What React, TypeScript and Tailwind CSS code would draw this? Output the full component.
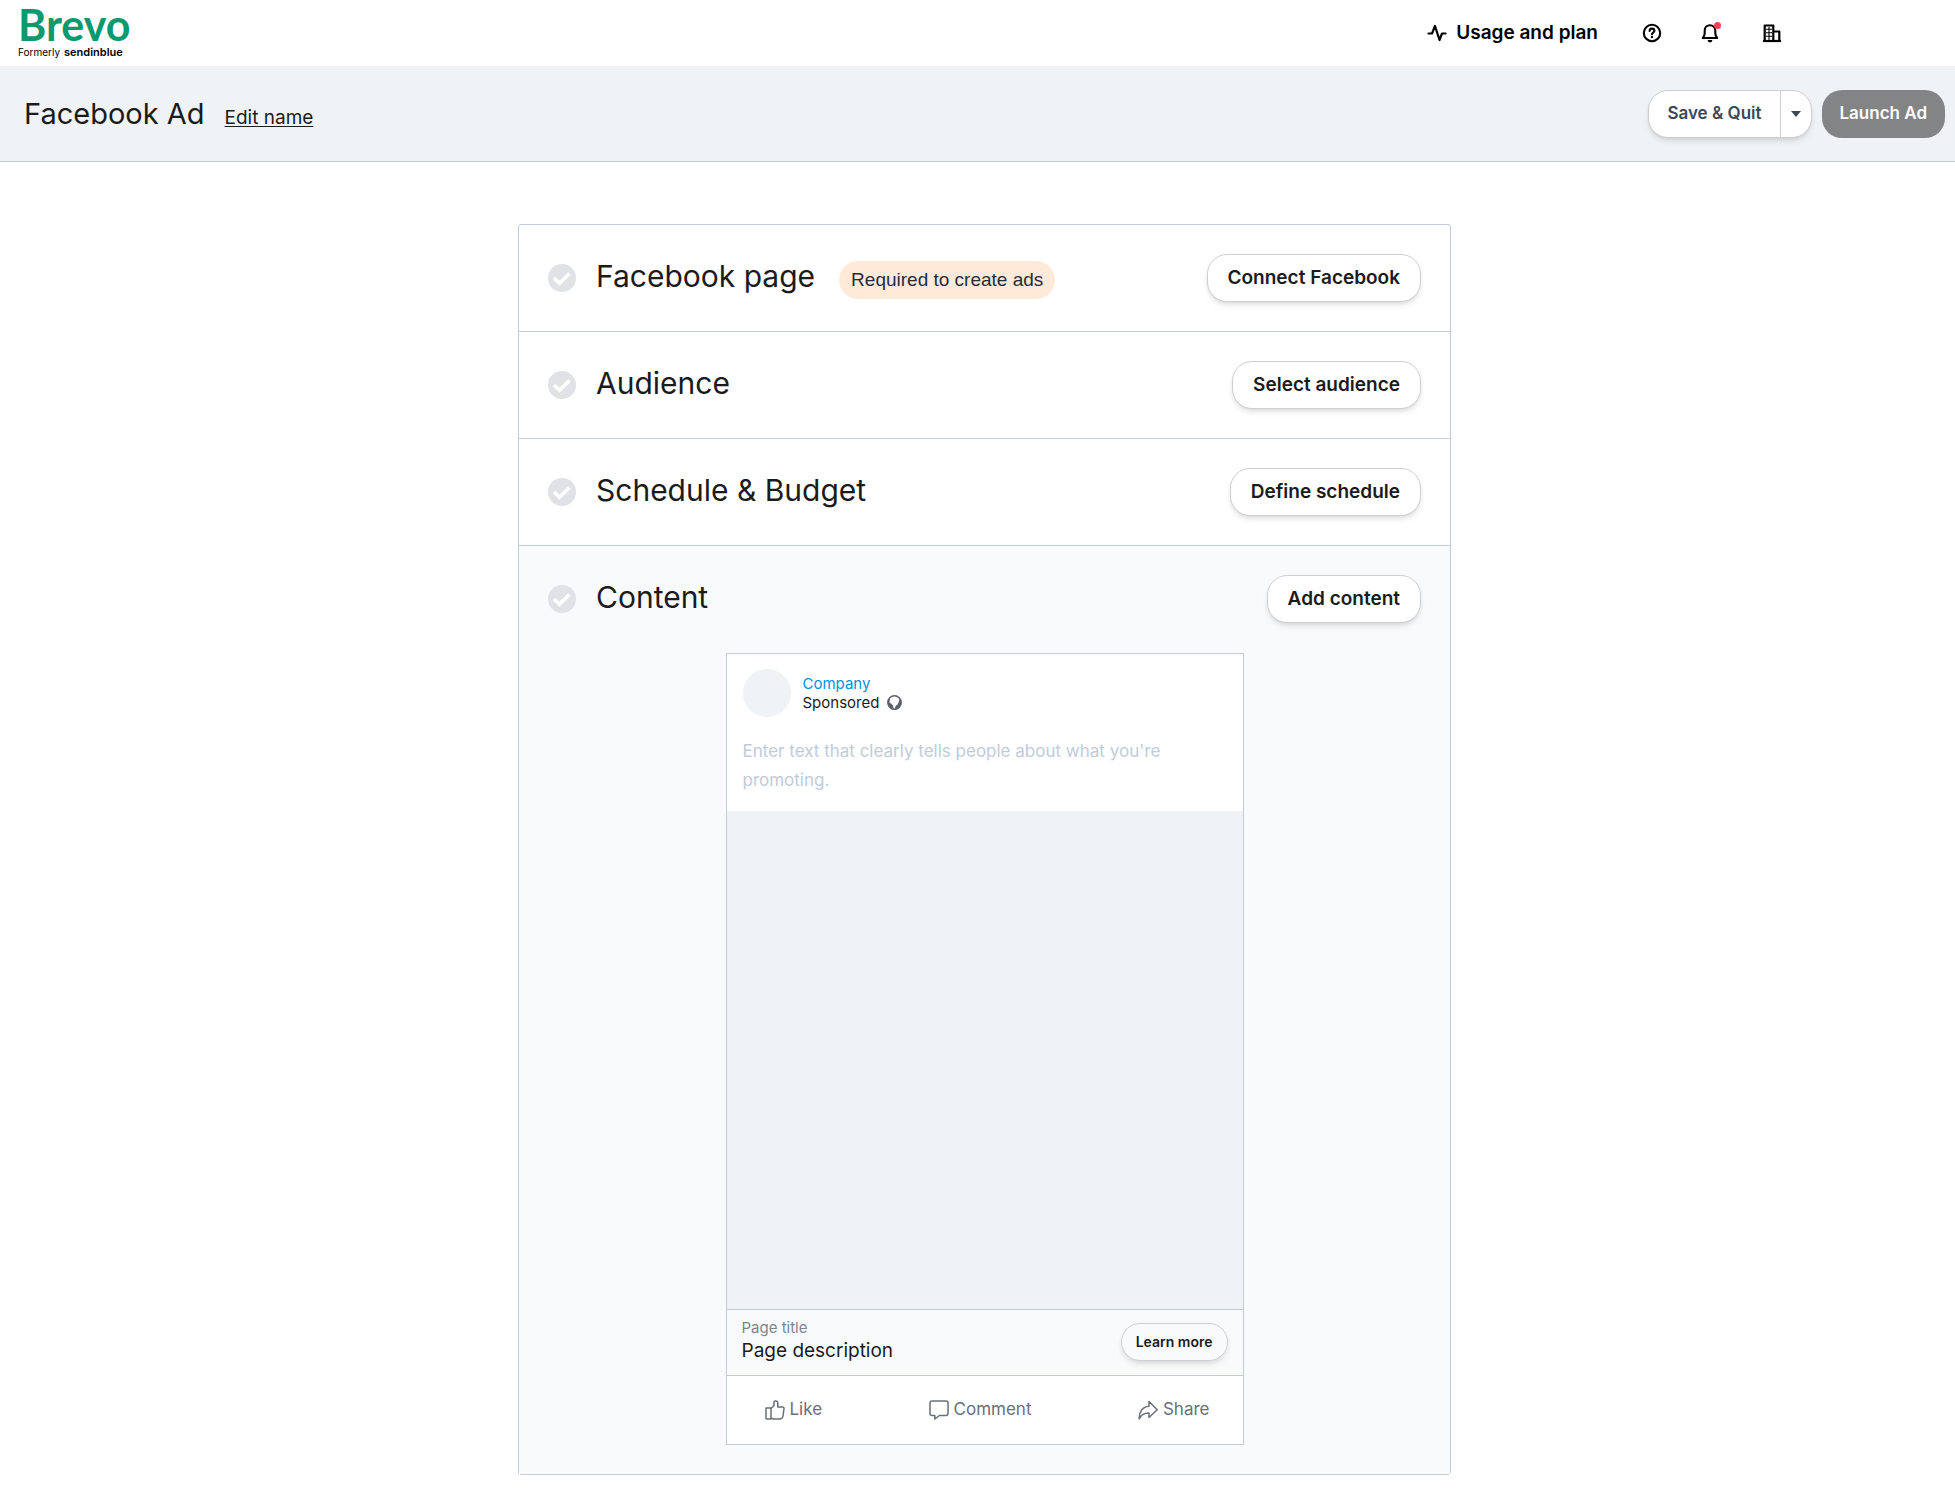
import type { ReactNode } from "react";

const steps = [
  { title: "Facebook page", action: "Connect Facebook", badge: "Required to create ads" },
  { title: "Audience", action: "Select audience" },
  { title: "Schedule & Budget", action: "Define schedule" },
];

function Logo() {
  return (
    <a href="#" className="flex flex-col text-black">
      <span className="font-[Lato] text-[43px] leading-[34px] font-bold text-[#0b996e]">
        Brevo
      </span>
      <span className="mt-1 flex items-baseline gap-1 text-[10px] leading-3">
        Formerly <span className="text-[11px] font-semibold">sendinblue</span>
      </span>
    </a>
  );
}

function ActivityIcon() {
  return (
    <svg viewBox="0 0 20 20" className="size-5" fill="none" stroke="currentColor" strokeWidth="2.2" strokeLinecap="round" strokeLinejoin="round">
      <path d="M1.5 10.5H5L8 3l4.500 14 2.500-6.500h3.500" />
    </svg>
  );
}

function HelpIcon() {
  return (
    <svg viewBox="0 0 20 20" className="size-5" fill="none" stroke="currentColor" strokeWidth="2.1" strokeLinecap="round">
      <circle cx="10" cy="10" r="8.2" />
      <path d="M7.6 8c0-1.5 1-2.4 2.4-2.4s2.4.9 2.4 2.2c0 1.7-2.4 1.8-2.4 3.4" />
      <circle cx="10" cy="14" r="1.2" fill="currentColor" stroke="none" />
    </svg>
  );
}

function BellIcon() {
  return (
    <svg viewBox="0 0 20 20" className="size-5" fill="none" stroke="currentColor" strokeWidth="2.1" strokeLinejoin="round" strokeLinecap="round">
      <path d="M2.8 15h14.4c-1.4-1.3-1.9-3-1.9-5V7.4c0-3-2.2-5.2-5.3-5.2S4.7 4.4 4.7 7.4V10c0 2-.5 3.7-1.9 5Z" />
      <path d="M7.6 17h4.8a2.4 2.4 0 0 1-4.8 0Z" fill="currentColor" stroke="none" />
    </svg>
  );
}

function BuildingIcon() {
  return (
    <svg viewBox="0 0 20 20" className="size-5" fill="none" stroke="currentColor" strokeWidth="2.2">
      <path d="M2.7 18V2.5h8.6V18M11.3 8.5h6V18" strokeLinejoin="round" />
      <path d="M1 18h18" />
      <path d="M4 6.2h6M4 9.7h6M4 13.2h6M7 4v13" strokeWidth="1.1" />
    </svg>
  );
}

function CheckIcon() {
  return (
    <svg viewBox="0 0 28 28" className="size-7 shrink-0">
      <circle cx="14" cy="14" r="14" fill="#e0e2e5" />
      <path d="m6 14 5.5 5.2L21.5 9.5" fill="none" stroke="#fff" strokeWidth="3.6" />
    </svg>
  );
}

function GlobeIcon() {
  return (
    <svg viewBox="0 0 16 16" className="size-[15px]">
      <circle cx="8" cy="8" r="7.2" fill="#fff" stroke="#5b616b" strokeWidth="1.5" />
      <path d="M1 8c0-2 1-4 2-5v3l-.5 2L5 9.500l1.500 2 .5 4C3.500 15.500 1 12 1 8ZM12 2.500 13.300 4.500l-.8 3-1.200 2.500-2 1.500L8 15.500c4 .3 7-3 7-7.500 0-2.500-1.300-4.500-3-5.500Z" fill="#5b616b" />
    </svg>
  );
}

function LikeIcon() {
  return (
    <svg viewBox="0 0 20 20" className="size-5" fill="none" stroke="currentColor" strokeWidth="1.5" strokeLinejoin="round">
      <path d="M1 8h5v11H1.8a.8.8 0 0 1-.8-.8V8ZM6 8.5 9 5.5V2c0-.6.4-1 1-1h.8C12 1 12.8 2 12.8 3.200V7h4.700c1 0 1.600.8 1.500 1.700l-1 7.300c-.3 1.800-1.500 3-3.300 3H8.500L6 18" />
    </svg>
  );
}

function CommentIcon() {
  return (
    <svg viewBox="0 0 20 20" className="size-5" fill="none" stroke="currentColor" strokeWidth="1.5" strokeLinejoin="round">
      <path d="M3 1h14a2 2 0 0 1 2 2v10.5a2 2 0 0 1-2 2h-6.500L5.800 19v-3.500H3a2 2 0 0 1-2-2V3a2 2 0 0 1 2-2Z" />
    </svg>
  );
}

function ShareIcon() {
  return (
    <svg viewBox="0 0 20 20" className="size-5" fill="none" stroke="currentColor" strokeWidth="1.5" strokeLinejoin="round">
      <path d="M11 1.5 19.2 9.7 11 17.5V13c-4.500-.2-7.500 1.500-9.800 5.800C.8 12 4.500 6.800 11 6.300V1.500Z" />
    </svg>
  );
}

type StepProps = { title: string; action: string; badge?: string };

function StepHeader({ title, action, badge }: StepProps) {
  return (
    <div className="flex items-center px-[29px] py-[29px]">
      <CheckIcon />
      <h2 className="ml-5 pb-1 text-[30px] leading-9 text-[#1b1b1b]">{title}</h2>
      {badge && (
        <span className="mt-1 ml-6 rounded-full bg-[#ffead9] px-3 py-1 font-['Liberation_Sans',sans-serif] text-[19px] leading-[30px] text-[#1f2d3d]">
          {badge}
        </span>
      )}
      <button className="ml-auto h-12 rounded-[20px] border border-[#cfcfcf] bg-white px-5 text-[19px] font-semibold text-[#1b1b1b] shadow-md">
        {action}
      </button>
    </div>
  );
}

function PostAction({ icon, label }: { icon: ReactNode; label: string }) {
  return (
    <button className="flex items-center gap-[5px] text-[17px] text-[#687078]">
      {icon}
      {label}
    </button>
  );
}

function AdPreview() {
  return (
    <article className="mx-auto mt-px w-full max-w-[518px] border border-[#c0ccda] bg-white">
      <div className="px-4 pt-[15px] pb-4">
        <div className="flex items-center gap-3">
          <div className="size-12 rounded-full bg-[#eff3f6]" />
          <div className="text-[15px] leading-[19px]">
            <a href="#" className="text-[#0092e0]">Company</a>
            <div className="flex items-center gap-2 text-[#1b1b1b]">
              Sponsored <GlobeIcon />
            </div>
          </div>
        </div>
        <p className="mt-5 text-[17px] leading-[29px] text-[#c0ccda]">
          Enter text that clearly tells people about what you're promoting.
        </p>
      </div>
      <div className="h-[498px] bg-[#eff3f6]" />
      <div className="flex items-center justify-between border-y border-[#c0ccda] bg-[#f9fafc] px-[15px] pt-2 pb-[10px]">
        <div>
          <div className="text-[15px] leading-[19px] text-[#7c858e]">Page title</div>
          <div className="text-[19px] leading-7 text-[#1b1b1b]">Page description</div>
        </div>
        <button className="h-[38px] rounded-full border border-[#cfcfcf] px-[14px] text-sm font-semibold text-[#1b1b1b] shadow-md">
          Learn more
        </button>
      </div>
      <div className="flex h-[68px] items-center justify-between pr-[33px] pl-[38px]">
        <PostAction icon={<LikeIcon />} label="Like" />
        <PostAction icon={<CommentIcon />} label="Comment" />
        <PostAction icon={<ShareIcon />} label="Share" />
      </div>
    </article>
  );
}

export default function App() {
  return (
    <div className="min-h-screen bg-white font-[Inter,sans-serif]">
      <header className="flex h-[66px] items-center justify-between pr-[173px] pl-[18px]">
        <Logo />
        <nav className="flex items-center text-black">
          <a href="#" className="flex items-center gap-[9px] text-[19px] font-semibold">
            <ActivityIcon />
            Usage and plan
          </a>
          <button aria-label="Help" className="ml-11">
            <HelpIcon />
          </button>
          <button aria-label="Notifications" className="relative ml-[38px]">
            <BellIcon />
            <span className="absolute -top-px -right-px size-[7px] rounded-full bg-[#ff3f56]" />
          </button>
          <button aria-label="Company" className="ml-[42px]">
            <BuildingIcon />
          </button>
        </nav>
      </header>

      <div className="flex h-[96px] items-center justify-between border-b border-[#c0ccda] bg-[#eff3f6] pr-[10px] pl-6">
        <div className="flex items-baseline gap-5 text-[#1b1b1b]">
          <h1 className="text-[29px] leading-8">Facebook Ad</h1>
          <a href="#" className="text-[19px] leading-6 underline underline-offset-2">Edit name</a>
        </div>
        <div className="flex gap-[10px] text-[17px] font-semibold">
          <div className="flex h-12 rounded-[20px] border border-[#cfcfcf] bg-white text-[#3c4858] shadow-md">
            <button className="px-[18px]">Save &amp; Quit</button>
            <button aria-label="More save options" className="border-l border-[#cfcfcf] px-[10px]">
              <svg viewBox="0 0 10 6" className="h-[6px] w-[10px]">
                <path d="M0 0h10L5 6Z" fill="currentColor" />
              </svg>
            </button>
          </div>
          <button className="h-12 rounded-[20px] bg-[#838485] px-[18px] text-white">Launch Ad</button>
        </div>
      </div>

      <main className="pt-[62px] pb-[25px] pl-[14px]">
        <div className="mx-auto max-w-[933px] rounded-[3px] border border-[#c0ccda]">
          {steps.map((step) => (
            <section key={step.title} className="border-b border-[#c0ccda]">
              <StepHeader {...step} />
            </section>
          ))}
          <section className="bg-[#f9fafc] pb-[29px]">
            <StepHeader title="Content" action="Add content" />
            <AdPreview />
          </section>
        </div>
      </main>
    </div>
  );
}
